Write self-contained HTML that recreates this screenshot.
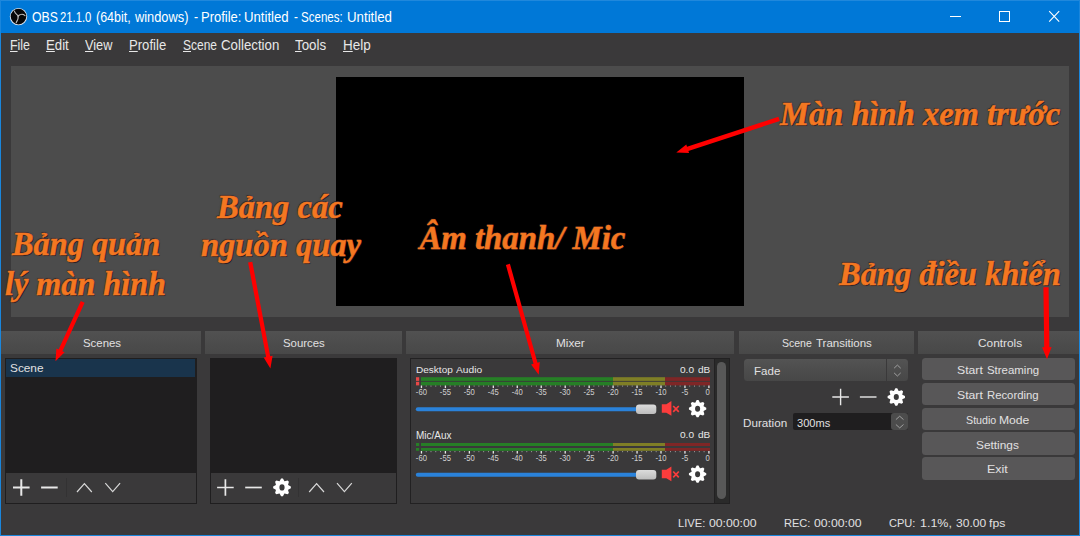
<!DOCTYPE html>
<html lang="vi">
<head>
<meta charset="utf-8">
<title>OBS 21.1.0</title>
<style>
html,body{margin:0;padding:0;}
body{width:1080px;height:536px;overflow:hidden;background:#3a393a;position:relative;font-family:"Liberation Sans","DejaVu Sans",sans-serif;color:#e1e0e1;font-size:12px;}
.abs{position:absolute;}
#title{left:0;top:0;width:1080px;height:33px;background:#0078d7;box-shadow:inset 0 1px 0 #2088dc;}
#frameL{left:0;top:0;width:1.1px;height:536px;background:#1a86dc;}
#frameR{left:1078.6px;top:0;width:1.4px;height:536px;background:#1a86dc;}
#frameB{left:0;top:534.5px;width:1080px;height:1.5px;background:#1a86dc;}
#preview{left:11px;top:66px;width:1058px;height:251px;background:#4c4c4c;}
#black{left:336px;top:77px;width:408px;height:229px;background:#000;}
.dock{top:331px;height:23px;background:linear-gradient(#515151,#484848);}
.list{background:#1f1e1f;box-sizing:border-box;}
.tbar{background:#3a393a;}
.btn{background:#585758;border-radius:3.5px;height:22.4px;left:922px;width:153.4px;}
.tx{position:absolute;white-space:nowrap;transform-origin:0 0;line-height:normal;color:#e1e0e1;font-family:"Liberation Sans","DejaVu Sans",sans-serif;}
.tx.w{color:#fff;}
.tx.m{color:#e8e8e8;}
.tx.m u{text-decoration:underline;text-decoration-thickness:1px;text-underline-offset:0.6px;text-decoration-skip-ink:none;}
.tx.x{color:#e8e8e8;}
.an{position:absolute;white-space:nowrap;transform-origin:0 0;line-height:normal;font-family:"Liberation Serif","DejaVu Serif",serif;font-weight:bold;font-style:italic;color:#f47721;-webkit-text-stroke:0.5px #f47721;text-shadow:1px 1px 0.5px rgba(30,20,25,.75),-0.6px -0.6px 0.6px rgba(30,20,35,.55),0 0 2px rgba(40,25,15,.5);}
svg text{font-family:"Liberation Sans","DejaVu Sans",sans-serif;font-size:8.7px;fill:#d0d0d0;}
</style>
</head>
<body>
<div id="title" class="abs">
 <svg class="abs" style="left:0;top:0" width="1080" height="33" viewBox="0 0 1080 33">
  <circle cx="18.5" cy="16.6" r="8.7" fill="#dfe6ee"/><circle cx="18.5" cy="16.6" r="7.8" fill="#070707"/>
  <g fill="none" stroke="#bdbdbd" stroke-width="1.15" stroke-linecap="round">
   <path d="M18.1 16C17.4 14.2 15 14.2 14.4 11"/><path d="M18.1 16C19.6 14.4 22.6 13.6 25 15.6"/><path d="M18.1 16C18.6 18.2 17.6 20.4 16.2 22.6"/>
  </g>
  <path d="M950 16.5h11" stroke="#fff" stroke-width="1"/><rect x="999.5" y="11.5" width="10" height="10" stroke="#fff" stroke-width="1" fill="none"/><path d="M1049.2 11.2l10 10.4M1059.2 11.2l-10 10.4" stroke="#fff" stroke-width="1.1" fill="none"/>
 </svg>
</div>
<div id="frameL" class="abs"></div><div id="frameR" class="abs"></div><div id="frameB" class="abs"></div>
<div id="preview" class="abs"></div>
<div id="black" class="abs"></div>

<div class="abs dock" style="left:1px;width:200px"></div>
<div class="abs dock" style="left:205px;width:197px"></div>
<div class="abs dock" style="left:406px;width:328px"></div>
<div class="abs dock" style="left:739px;width:175px"></div>
<div class="abs dock" style="left:918px;width:160.5px"></div>

<!-- scenes -->
<div class="abs list" style="left:5px;top:358px;width:192px;height:145.5px"></div>
<div class="abs" style="left:6px;top:358.8px;width:189.4px;height:18.4px;background:#19344c"></div>
<div class="abs tbar" style="left:6px;top:473px;width:190px;height:29.8px"></div>
<!-- sources -->
<div class="abs list" style="left:210px;top:358px;width:187px;height:145.5px"></div>
<div class="abs tbar" style="left:210.8px;top:473px;width:185.4px;height:29.8px"></div>
<!-- mixer -->
<div class="abs" style="left:410px;top:358px;width:320px;height:145.5px;box-sizing:border-box;border:1px solid #222122"></div>
<div class="abs" style="left:714px;top:359px;width:15px;height:143.5px;background:#2a2a2a;box-sizing:border-box;border-left:1px solid #222122"></div>
<div class="abs" style="left:716.9px;top:361.6px;width:9.2px;height:137.6px;border-radius:4.6px;background:#585858"></div>
<!-- transitions -->
<div class="abs" style="left:744px;top:359px;width:164px;height:22px;border-radius:3.5px;background:linear-gradient(#535353,#474747)"></div>
<div class="abs" style="left:886.3px;top:359px;width:1px;height:22px;background:#3a393a"></div>
<div class="abs" style="left:792.7px;top:413.2px;width:115.3px;height:16.5px;background:#1f1e1f;border-radius:2px"></div>
<div class="abs" style="left:891px;top:413.2px;width:17px;height:16.5px;background:#4c4c4c;border-radius:3px"></div>
<!-- controls -->
<div class="abs btn" style="top:358px"></div>
<div class="abs btn" style="top:382.8px"></div>
<div class="abs btn" style="top:407.6px"></div>
<div class="abs btn" style="top:432.4px"></div>
<div class="abs btn" style="top:457.2px"></div>

<svg class="abs" style="left:0;top:0" width="1080" height="536" viewBox="0 0 1080 536">
<defs><linearGradient id="hg" x1="0" y1="0" x2="0" y2="1"><stop offset="0" stop-color="#dcdcdc"/><stop offset="1" stop-color="#bdbdbd"/></linearGradient></defs>
<rect x="416" y="377.2" width="3.2" height="3.7" fill="#e84848"/>
<rect x="421" y="377.2" width="192" height="3.7" fill="#267f26"/>
<rect x="613" y="377.2" width="52" height="3.7" fill="#7f7f26"/>
<rect x="665" y="377.2" width="45" height="3.7" fill="#7f2626"/>
<rect x="416" y="381.8" width="3.2" height="3.6" fill="#e84848"/>
<rect x="421" y="381.8" width="192" height="3.6" fill="#267f26"/>
<rect x="613" y="381.8" width="52" height="3.6" fill="#7f7f26"/>
<rect x="665" y="381.8" width="45" height="3.6" fill="#7f2626"/>
<rect x="420.80" y="385.5" width="1.3" height="2.6" fill="#e6e6e6"/>
<rect x="425.74" y="385.5" width="0.9" height="1.2" fill="#9a9a9a"/>
<rect x="430.53" y="385.5" width="0.9" height="1.2" fill="#9a9a9a"/>
<rect x="435.32" y="385.5" width="0.9" height="1.2" fill="#9a9a9a"/>
<rect x="440.11" y="385.5" width="0.9" height="1.2" fill="#9a9a9a"/>
<rect x="444.75" y="385.5" width="1.3" height="2.6" fill="#e6e6e6"/>
<rect x="449.70" y="385.5" width="0.9" height="1.2" fill="#9a9a9a"/>
<rect x="454.49" y="385.5" width="0.9" height="1.2" fill="#9a9a9a"/>
<rect x="459.28" y="385.5" width="0.9" height="1.2" fill="#9a9a9a"/>
<rect x="464.07" y="385.5" width="0.9" height="1.2" fill="#9a9a9a"/>
<rect x="468.71" y="385.5" width="1.3" height="2.6" fill="#e6e6e6"/>
<rect x="473.65" y="385.5" width="0.9" height="1.2" fill="#9a9a9a"/>
<rect x="478.44" y="385.5" width="0.9" height="1.2" fill="#9a9a9a"/>
<rect x="483.23" y="385.5" width="0.9" height="1.2" fill="#9a9a9a"/>
<rect x="488.02" y="385.5" width="0.9" height="1.2" fill="#9a9a9a"/>
<rect x="492.66" y="385.5" width="1.3" height="2.6" fill="#e6e6e6"/>
<rect x="497.61" y="385.5" width="0.9" height="1.2" fill="#9a9a9a"/>
<rect x="502.40" y="385.5" width="0.9" height="1.2" fill="#9a9a9a"/>
<rect x="507.19" y="385.5" width="0.9" height="1.2" fill="#9a9a9a"/>
<rect x="511.98" y="385.5" width="0.9" height="1.2" fill="#9a9a9a"/>
<rect x="516.62" y="385.5" width="1.3" height="2.6" fill="#e6e6e6"/>
<rect x="521.56" y="385.5" width="0.9" height="1.2" fill="#9a9a9a"/>
<rect x="526.35" y="385.5" width="0.9" height="1.2" fill="#9a9a9a"/>
<rect x="531.14" y="385.5" width="0.9" height="1.2" fill="#9a9a9a"/>
<rect x="535.93" y="385.5" width="0.9" height="1.2" fill="#9a9a9a"/>
<rect x="540.57" y="385.5" width="1.3" height="2.6" fill="#e6e6e6"/>
<rect x="545.52" y="385.5" width="0.9" height="1.2" fill="#9a9a9a"/>
<rect x="550.31" y="385.5" width="0.9" height="1.2" fill="#9a9a9a"/>
<rect x="555.10" y="385.5" width="0.9" height="1.2" fill="#9a9a9a"/>
<rect x="559.89" y="385.5" width="0.9" height="1.2" fill="#9a9a9a"/>
<rect x="564.53" y="385.5" width="1.3" height="2.6" fill="#e6e6e6"/>
<rect x="569.47" y="385.5" width="0.9" height="1.2" fill="#9a9a9a"/>
<rect x="574.26" y="385.5" width="0.9" height="1.2" fill="#9a9a9a"/>
<rect x="579.05" y="385.5" width="0.9" height="1.2" fill="#9a9a9a"/>
<rect x="583.84" y="385.5" width="0.9" height="1.2" fill="#9a9a9a"/>
<rect x="588.49" y="385.5" width="1.3" height="2.6" fill="#e6e6e6"/>
<rect x="593.43" y="385.5" width="0.9" height="1.2" fill="#9a9a9a"/>
<rect x="598.22" y="385.5" width="0.9" height="1.2" fill="#9a9a9a"/>
<rect x="603.01" y="385.5" width="0.9" height="1.2" fill="#9a9a9a"/>
<rect x="607.80" y="385.5" width="0.9" height="1.2" fill="#9a9a9a"/>
<rect x="612.44" y="385.5" width="1.3" height="2.6" fill="#e6e6e6"/>
<rect x="617.38" y="385.5" width="0.9" height="1.2" fill="#9a9a9a"/>
<rect x="622.17" y="385.5" width="0.9" height="1.2" fill="#9a9a9a"/>
<rect x="626.96" y="385.5" width="0.9" height="1.2" fill="#9a9a9a"/>
<rect x="631.75" y="385.5" width="0.9" height="1.2" fill="#9a9a9a"/>
<rect x="636.39" y="385.5" width="1.3" height="2.6" fill="#e6e6e6"/>
<rect x="641.34" y="385.5" width="0.9" height="1.2" fill="#9a9a9a"/>
<rect x="646.13" y="385.5" width="0.9" height="1.2" fill="#9a9a9a"/>
<rect x="650.92" y="385.5" width="0.9" height="1.2" fill="#9a9a9a"/>
<rect x="655.71" y="385.5" width="0.9" height="1.2" fill="#9a9a9a"/>
<rect x="660.35" y="385.5" width="1.3" height="2.6" fill="#e6e6e6"/>
<rect x="665.29" y="385.5" width="0.9" height="1.2" fill="#9a9a9a"/>
<rect x="670.08" y="385.5" width="0.9" height="1.2" fill="#9a9a9a"/>
<rect x="674.87" y="385.5" width="0.9" height="1.2" fill="#9a9a9a"/>
<rect x="679.66" y="385.5" width="0.9" height="1.2" fill="#9a9a9a"/>
<rect x="684.30" y="385.5" width="1.3" height="2.6" fill="#e6e6e6"/>
<rect x="689.25" y="385.5" width="0.9" height="1.2" fill="#9a9a9a"/>
<rect x="694.04" y="385.5" width="0.9" height="1.2" fill="#9a9a9a"/>
<rect x="698.83" y="385.5" width="0.9" height="1.2" fill="#9a9a9a"/>
<rect x="703.62" y="385.5" width="0.9" height="1.2" fill="#9a9a9a"/>
<rect x="708.26" y="385.5" width="1.3" height="2.6" fill="#e6e6e6"/>
<text transform="translate(421.4,394.9) scale(0.88,1)" text-anchor="middle">-60</text>
<text transform="translate(445.4,394.9) scale(0.88,1)" text-anchor="middle">-55</text>
<text transform="translate(469.3,394.9) scale(0.88,1)" text-anchor="middle">-50</text>
<text transform="translate(493.3,394.9) scale(0.88,1)" text-anchor="middle">-45</text>
<text transform="translate(517.2,394.9) scale(0.88,1)" text-anchor="middle">-40</text>
<text transform="translate(541.2,394.9) scale(0.88,1)" text-anchor="middle">-35</text>
<text transform="translate(565.1,394.9) scale(0.88,1)" text-anchor="middle">-30</text>
<text transform="translate(589.1,394.9) scale(0.88,1)" text-anchor="middle">-25</text>
<text transform="translate(613.0,394.9) scale(0.88,1)" text-anchor="middle">-20</text>
<text transform="translate(637.0,394.9) scale(0.88,1)" text-anchor="middle">-15</text>
<text transform="translate(661.0,394.9) scale(0.88,1)" text-anchor="middle">-10</text>
<text transform="translate(684.9,394.9) scale(0.88,1)" text-anchor="middle">-5</text>
<text transform="translate(707.7,394.9) scale(0.88,1)" text-anchor="middle">0</text>
<rect x="415.8" y="407.2" width="222" height="4" rx="2" fill="#2a82da"/>
<rect x="636" y="404.5" width="20.3" height="9.4" rx="3" fill="url(#hg)"/>
<g transform="translate(0,0)"><path d="M661.8 404.2H666.3L671.4 401V415.8L666.3 412.7H661.8Z" fill="#fc3c3c"/><path d="M673.2 406l5.6 5.8M678.8 406l-5.6 5.8" stroke="#fc3c3c" stroke-width="1.7" fill="none"/></g>
<path transform="translate(697.6,408.7) scale(0.98)" d="M-2.53 -6.10 L-2.42 -6.14 L-0.93 -8.85 L0.93 -8.85 L2.42 -6.14 L2.53 -6.10 L2.63 -6.05 L5.60 -6.92 L6.92 -5.60 L6.05 -2.63 L6.10 -2.53 L6.14 -2.42 L8.85 -0.93 L8.85 0.93 L6.14 2.42 L6.10 2.53 L6.05 2.63 L6.92 5.60 L5.60 6.92 L2.63 6.05 L2.53 6.10 L2.42 6.14 L0.93 8.85 L-0.93 8.85 L-2.42 6.14 L-2.53 6.10 L-2.63 6.05 L-5.60 6.92 L-6.92 5.60 L-6.05 2.63 L-6.10 2.53 L-6.14 2.42 L-8.85 0.93 L-8.85 -0.93 L-6.14 -2.42 L-6.10 -2.53 L-6.05 -2.63 L-6.92 -5.60 L-5.60 -6.92 L-2.63 -6.05Z M2.6 0 A2.6 3.1 0 1 0 -2.6 0 A2.6 3.1 0 1 0 2.6 0Z" fill="#fff" fill-rule="evenodd"/>
<rect x="416" y="443.0" width="3.2" height="3.0" fill="#267f26"/>
<rect x="421" y="443.0" width="192" height="3.0" fill="#267f26"/>
<rect x="613" y="443.0" width="52" height="3.0" fill="#7f7f26"/>
<rect x="665" y="443.0" width="45" height="3.0" fill="#7f2626"/>
<rect x="416" y="448.0" width="3.2" height="2.8" fill="#267f26"/>
<rect x="421" y="448.0" width="192" height="2.8" fill="#267f26"/>
<rect x="613" y="448.0" width="52" height="2.8" fill="#7f7f26"/>
<rect x="665" y="448.0" width="45" height="2.8" fill="#7f2626"/>
<rect x="420.80" y="451.0" width="1.3" height="2.6" fill="#e6e6e6"/>
<rect x="425.74" y="451.0" width="0.9" height="1.2" fill="#9a9a9a"/>
<rect x="430.53" y="451.0" width="0.9" height="1.2" fill="#9a9a9a"/>
<rect x="435.32" y="451.0" width="0.9" height="1.2" fill="#9a9a9a"/>
<rect x="440.11" y="451.0" width="0.9" height="1.2" fill="#9a9a9a"/>
<rect x="444.75" y="451.0" width="1.3" height="2.6" fill="#e6e6e6"/>
<rect x="449.70" y="451.0" width="0.9" height="1.2" fill="#9a9a9a"/>
<rect x="454.49" y="451.0" width="0.9" height="1.2" fill="#9a9a9a"/>
<rect x="459.28" y="451.0" width="0.9" height="1.2" fill="#9a9a9a"/>
<rect x="464.07" y="451.0" width="0.9" height="1.2" fill="#9a9a9a"/>
<rect x="468.71" y="451.0" width="1.3" height="2.6" fill="#e6e6e6"/>
<rect x="473.65" y="451.0" width="0.9" height="1.2" fill="#9a9a9a"/>
<rect x="478.44" y="451.0" width="0.9" height="1.2" fill="#9a9a9a"/>
<rect x="483.23" y="451.0" width="0.9" height="1.2" fill="#9a9a9a"/>
<rect x="488.02" y="451.0" width="0.9" height="1.2" fill="#9a9a9a"/>
<rect x="492.66" y="451.0" width="1.3" height="2.6" fill="#e6e6e6"/>
<rect x="497.61" y="451.0" width="0.9" height="1.2" fill="#9a9a9a"/>
<rect x="502.40" y="451.0" width="0.9" height="1.2" fill="#9a9a9a"/>
<rect x="507.19" y="451.0" width="0.9" height="1.2" fill="#9a9a9a"/>
<rect x="511.98" y="451.0" width="0.9" height="1.2" fill="#9a9a9a"/>
<rect x="516.62" y="451.0" width="1.3" height="2.6" fill="#e6e6e6"/>
<rect x="521.56" y="451.0" width="0.9" height="1.2" fill="#9a9a9a"/>
<rect x="526.35" y="451.0" width="0.9" height="1.2" fill="#9a9a9a"/>
<rect x="531.14" y="451.0" width="0.9" height="1.2" fill="#9a9a9a"/>
<rect x="535.93" y="451.0" width="0.9" height="1.2" fill="#9a9a9a"/>
<rect x="540.57" y="451.0" width="1.3" height="2.6" fill="#e6e6e6"/>
<rect x="545.52" y="451.0" width="0.9" height="1.2" fill="#9a9a9a"/>
<rect x="550.31" y="451.0" width="0.9" height="1.2" fill="#9a9a9a"/>
<rect x="555.10" y="451.0" width="0.9" height="1.2" fill="#9a9a9a"/>
<rect x="559.89" y="451.0" width="0.9" height="1.2" fill="#9a9a9a"/>
<rect x="564.53" y="451.0" width="1.3" height="2.6" fill="#e6e6e6"/>
<rect x="569.47" y="451.0" width="0.9" height="1.2" fill="#9a9a9a"/>
<rect x="574.26" y="451.0" width="0.9" height="1.2" fill="#9a9a9a"/>
<rect x="579.05" y="451.0" width="0.9" height="1.2" fill="#9a9a9a"/>
<rect x="583.84" y="451.0" width="0.9" height="1.2" fill="#9a9a9a"/>
<rect x="588.49" y="451.0" width="1.3" height="2.6" fill="#e6e6e6"/>
<rect x="593.43" y="451.0" width="0.9" height="1.2" fill="#9a9a9a"/>
<rect x="598.22" y="451.0" width="0.9" height="1.2" fill="#9a9a9a"/>
<rect x="603.01" y="451.0" width="0.9" height="1.2" fill="#9a9a9a"/>
<rect x="607.80" y="451.0" width="0.9" height="1.2" fill="#9a9a9a"/>
<rect x="612.44" y="451.0" width="1.3" height="2.6" fill="#e6e6e6"/>
<rect x="617.38" y="451.0" width="0.9" height="1.2" fill="#9a9a9a"/>
<rect x="622.17" y="451.0" width="0.9" height="1.2" fill="#9a9a9a"/>
<rect x="626.96" y="451.0" width="0.9" height="1.2" fill="#9a9a9a"/>
<rect x="631.75" y="451.0" width="0.9" height="1.2" fill="#9a9a9a"/>
<rect x="636.39" y="451.0" width="1.3" height="2.6" fill="#e6e6e6"/>
<rect x="641.34" y="451.0" width="0.9" height="1.2" fill="#9a9a9a"/>
<rect x="646.13" y="451.0" width="0.9" height="1.2" fill="#9a9a9a"/>
<rect x="650.92" y="451.0" width="0.9" height="1.2" fill="#9a9a9a"/>
<rect x="655.71" y="451.0" width="0.9" height="1.2" fill="#9a9a9a"/>
<rect x="660.35" y="451.0" width="1.3" height="2.6" fill="#e6e6e6"/>
<rect x="665.29" y="451.0" width="0.9" height="1.2" fill="#9a9a9a"/>
<rect x="670.08" y="451.0" width="0.9" height="1.2" fill="#9a9a9a"/>
<rect x="674.87" y="451.0" width="0.9" height="1.2" fill="#9a9a9a"/>
<rect x="679.66" y="451.0" width="0.9" height="1.2" fill="#9a9a9a"/>
<rect x="684.30" y="451.0" width="1.3" height="2.6" fill="#e6e6e6"/>
<rect x="689.25" y="451.0" width="0.9" height="1.2" fill="#9a9a9a"/>
<rect x="694.04" y="451.0" width="0.9" height="1.2" fill="#9a9a9a"/>
<rect x="698.83" y="451.0" width="0.9" height="1.2" fill="#9a9a9a"/>
<rect x="703.62" y="451.0" width="0.9" height="1.2" fill="#9a9a9a"/>
<rect x="708.26" y="451.0" width="1.3" height="2.6" fill="#e6e6e6"/>
<text transform="translate(421.4,461.1) scale(0.88,1)" text-anchor="middle">-60</text>
<text transform="translate(445.4,461.1) scale(0.88,1)" text-anchor="middle">-55</text>
<text transform="translate(469.3,461.1) scale(0.88,1)" text-anchor="middle">-50</text>
<text transform="translate(493.3,461.1) scale(0.88,1)" text-anchor="middle">-45</text>
<text transform="translate(517.2,461.1) scale(0.88,1)" text-anchor="middle">-40</text>
<text transform="translate(541.2,461.1) scale(0.88,1)" text-anchor="middle">-35</text>
<text transform="translate(565.1,461.1) scale(0.88,1)" text-anchor="middle">-30</text>
<text transform="translate(589.1,461.1) scale(0.88,1)" text-anchor="middle">-25</text>
<text transform="translate(613.0,461.1) scale(0.88,1)" text-anchor="middle">-20</text>
<text transform="translate(637.0,461.1) scale(0.88,1)" text-anchor="middle">-15</text>
<text transform="translate(661.0,461.1) scale(0.88,1)" text-anchor="middle">-10</text>
<text transform="translate(684.9,461.1) scale(0.88,1)" text-anchor="middle">-5</text>
<text transform="translate(707.7,461.1) scale(0.88,1)" text-anchor="middle">0</text>
<rect x="415.8" y="472.7" width="222" height="4" rx="2" fill="#2a82da"/>
<rect x="636" y="470.0" width="20.3" height="9.4" rx="3" fill="url(#hg)"/>
<g transform="translate(0,65.5)"><path d="M661.8 404.2H666.3L671.4 401V415.8L666.3 412.7H661.8Z" fill="#fc3c3c"/><path d="M673.2 406l5.6 5.8M678.8 406l-5.6 5.8" stroke="#fc3c3c" stroke-width="1.7" fill="none"/></g>
<path transform="translate(697.6,474.2) scale(0.98)" d="M-2.53 -6.10 L-2.42 -6.14 L-0.93 -8.85 L0.93 -8.85 L2.42 -6.14 L2.53 -6.10 L2.63 -6.05 L5.60 -6.92 L6.92 -5.60 L6.05 -2.63 L6.10 -2.53 L6.14 -2.42 L8.85 -0.93 L8.85 0.93 L6.14 2.42 L6.10 2.53 L6.05 2.63 L6.92 5.60 L5.60 6.92 L2.63 6.05 L2.53 6.10 L2.42 6.14 L0.93 8.85 L-0.93 8.85 L-2.42 6.14 L-2.53 6.10 L-2.63 6.05 L-5.60 6.92 L-6.92 5.60 L-6.05 2.63 L-6.10 2.53 L-6.14 2.42 L-8.85 0.93 L-8.85 -0.93 L-6.14 -2.42 L-6.10 -2.53 L-6.05 -2.63 L-6.92 -5.60 L-5.60 -6.92 L-2.63 -6.05Z M2.6 0 A2.6 3.1 0 1 0 -2.6 0 A2.6 3.1 0 1 0 2.6 0Z" fill="#fff" fill-rule="evenodd"/>
<path d="M13.0 487.5H29.6M21.3 479.2V495.8" stroke="#e8e8e8" stroke-width="2" fill="none"/>
<path d="M41.099999999999994 487.5H57.7" stroke="#e8e8e8" stroke-width="2" fill="none"/>
<rect x="66" y="478" width="1" height="19" fill="#333233"/>
<path d="M77.0 492.0L84.4 483.6L91.80000000000001 492.0" stroke="#d8d8d8" stroke-width="1.2" fill="none"/>
<path d="M105.3 483.20000000000005L112.7 491.6L120.10000000000001 483.20000000000005" stroke="#d8d8d8" stroke-width="1.2" fill="none"/>
<path d="M217.1 487.5H233.70000000000002M225.4 479.2V495.8" stroke="#e8e8e8" stroke-width="1.7" fill="none"/>
<path d="M245.2 487.5H261.8" stroke="#e8e8e8" stroke-width="1.7" fill="none"/>
<path transform="translate(282,487.4) scale(1.0)" d="M-2.53 -6.10 L-2.42 -6.14 L-0.93 -8.85 L0.93 -8.85 L2.42 -6.14 L2.53 -6.10 L2.63 -6.05 L5.60 -6.92 L6.92 -5.60 L6.05 -2.63 L6.10 -2.53 L6.14 -2.42 L8.85 -0.93 L8.85 0.93 L6.14 2.42 L6.10 2.53 L6.05 2.63 L6.92 5.60 L5.60 6.92 L2.63 6.05 L2.53 6.10 L2.42 6.14 L0.93 8.85 L-0.93 8.85 L-2.42 6.14 L-2.53 6.10 L-2.63 6.05 L-5.60 6.92 L-6.92 5.60 L-6.05 2.63 L-6.10 2.53 L-6.14 2.42 L-8.85 0.93 L-8.85 -0.93 L-6.14 -2.42 L-6.10 -2.53 L-6.05 -2.63 L-6.92 -5.60 L-5.60 -6.92 L-2.63 -6.05Z M2.6 0 A2.6 3.1 0 1 0 -2.6 0 A2.6 3.1 0 1 0 2.6 0Z" fill="#fff" fill-rule="evenodd"/>
<rect x="298" y="478" width="1" height="19" fill="#333233"/>
<path d="M309.20000000000005 492.0L316.6 483.6L324.0 492.0" stroke="#d8d8d8" stroke-width="1.2" fill="none"/>
<path d="M337.0 483.20000000000005L344.4 491.6L351.79999999999995 483.20000000000005" stroke="#d8d8d8" stroke-width="1.2" fill="none"/>
<path d="M832.3000000000001 397H848.9M840.6 388.7V405.3" stroke="#e8e8e8" stroke-width="1.4" fill="none"/>
<path d="M859.9000000000001 397H876.5" stroke="#e8e8e8" stroke-width="1.4" fill="none"/>
<path transform="translate(896.3,397) scale(0.98)" d="M-2.53 -6.10 L-2.42 -6.14 L-0.93 -8.85 L0.93 -8.85 L2.42 -6.14 L2.53 -6.10 L2.63 -6.05 L5.60 -6.92 L6.92 -5.60 L6.05 -2.63 L6.10 -2.53 L6.14 -2.42 L8.85 -0.93 L8.85 0.93 L6.14 2.42 L6.10 2.53 L6.05 2.63 L6.92 5.60 L5.60 6.92 L2.63 6.05 L2.53 6.10 L2.42 6.14 L0.93 8.85 L-0.93 8.85 L-2.42 6.14 L-2.53 6.10 L-2.63 6.05 L-5.60 6.92 L-6.92 5.60 L-6.05 2.63 L-6.10 2.53 L-6.14 2.42 L-8.85 0.93 L-8.85 -0.93 L-6.14 -2.42 L-6.10 -2.53 L-6.05 -2.63 L-6.92 -5.60 L-5.60 -6.92 L-2.63 -6.05Z M2.6 0 A2.6 3.1 0 1 0 -2.6 0 A2.6 3.1 0 1 0 2.6 0Z" fill="#fff" fill-rule="evenodd"/>
<g stroke="#a8a8a8" stroke-width="0.9" fill="none">
<path d="M894.1 368.2l3.3-3.1 3.3 3.1M894.1 372.9l3.3 3.1 3.3-3.1"/>
<path d="M895.9 419.6l3.8-3.4 3.8 3.4M895.9 424.5l3.8 3.4 3.8-3.4"/>
</g>
</svg>

<span class="tx w" style="left:32.3px;top:8.9px;font-size:14.2px;transform:scaleX(0.864)">OBS</span>
<span class="tx w" style="left:60.0px;top:8.9px;font-size:14.2px;transform:scaleX(0.796)">21.1.0</span>
<span class="tx w" style="left:96.0px;top:8.9px;font-size:14.2px;transform:scaleX(0.880)">(64bit,</span>
<span class="tx w" style="left:134.8px;top:8.9px;font-size:14.2px;transform:scaleX(0.903)">windows)</span>
<span class="tx w" style="left:193.6px;top:8.9px;font-size:14.2px;transform:scaleX(0.866)">-</span>
<span class="tx w" style="left:201.0px;top:8.9px;font-size:14.2px;transform:scaleX(0.915)">Profile:</span>
<span class="tx w" style="left:244.3px;top:8.9px;font-size:14.2px;transform:scaleX(0.929)">Untitled</span>
<span class="tx w" style="left:294.3px;top:8.9px;font-size:14.2px;transform:scaleX(0.824)">-</span>
<span class="tx w" style="left:301.0px;top:8.9px;font-size:14.2px;transform:scaleX(0.813)">Scenes:</span>
<span class="tx w" style="left:347.3px;top:8.9px;font-size:14.2px;transform:scaleX(0.935)">Untitled</span>
<span class="tx m" style="left:9.5px;top:37.1px;font-size:14.3px;transform:scaleX(0.868)"><u>F</u>ile</span>
<span class="tx m" style="left:45.5px;top:37.1px;font-size:14.3px;transform:scaleX(0.925)"><u>E</u>dit</span>
<span class="tx m" style="left:84.8px;top:37.1px;font-size:14.3px;transform:scaleX(0.892)"><u>V</u>iew</span>
<span class="tx m" style="left:129.3px;top:37.1px;font-size:14.3px;transform:scaleX(0.917)"><u>P</u>rofile</span>
<span class="tx m" style="left:183.3px;top:37.1px;font-size:14.3px;transform:scaleX(0.838)"><u>S</u>cene</span>
<span class="tx m" style="left:220.5px;top:37.1px;font-size:14.3px;transform:scaleX(0.929)">Collection</span>
<span class="tx m" style="left:294.8px;top:37.1px;font-size:14.3px;transform:scaleX(0.934)"><u>T</u>ools</span>
<span class="tx m" style="left:342.6px;top:37.1px;font-size:14.3px;transform:scaleX(0.941)"><u>H</u>elp</span>
<span class="tx s" style="left:83.0px;top:336.5px;font-size:11.5px;transform:scaleX(0.991)">Scenes</span>
<span class="tx s" style="left:283.0px;top:336.5px;font-size:11.5px;transform:scaleX(0.991)">Sources</span>
<span class="tx s" style="left:555.6px;top:336.5px;font-size:11.5px;transform:scaleX(1.024)">Mixer</span>
<span class="tx s" style="left:782.0px;top:336.5px;font-size:11.5px;transform:scaleX(0.914)">Scene</span>
<span class="tx s" style="left:816.4px;top:336.5px;font-size:11.5px;transform:scaleX(1.001)">Transitions</span>
<span class="tx s" style="left:977.5px;top:336.5px;font-size:11.5px;transform:scaleX(1.030)">Controls</span>
<span class="tx s" style="left:9.8px;top:362.0px;font-size:11.5px;transform:scaleX(1.027)">Scene</span>
<span class="tx x" style="left:680.0px;top:364.0px;font-size:9.7px;transform:scaleX(1.039)">0.0</span>
<span class="tx x" style="left:698.0px;top:364.0px;font-size:9.7px;transform:scaleX(1.037)">dB</span>
<span class="tx x" style="left:680.0px;top:428.6px;font-size:9.7px;transform:scaleX(1.039)">0.0</span>
<span class="tx x" style="left:698.0px;top:428.6px;font-size:9.7px;transform:scaleX(1.037)">dB</span>
<span class="tx x" style="left:416.0px;top:364.0px;font-size:9.7px;transform:scaleX(1.035)">Desktop</span>
<span class="tx x" style="left:456.3px;top:364.0px;font-size:9.7px;transform:scaleX(1.057)">Audio</span>
<span class="tx x" style="left:416.0px;top:429.2px;font-size:10.6px;transform:scaleX(0.942)">Mic/Aux</span>
<span class="tx s" style="left:957.2px;top:363.8px;font-size:11.5px;transform:scaleX(1.062)">Start</span>
<span class="tx s" style="left:986.5px;top:363.8px;font-size:11.5px;transform:scaleX(0.994)">Streaming</span>
<span class="tx s" style="left:957.2px;top:388.7px;font-size:11.5px;transform:scaleX(1.062)">Start</span>
<span class="tx s" style="left:987.0px;top:388.7px;font-size:11.5px;transform:scaleX(0.984)">Recording</span>
<span class="tx s" style="left:965.7px;top:413.6px;font-size:11.5px;transform:scaleX(0.929)">Studio</span>
<span class="tx s" style="left:999.3px;top:413.6px;font-size:11.5px;transform:scaleX(1.056)">Mode</span>
<span class="tx s" style="left:976.2px;top:438.5px;font-size:11.5px;transform:scaleX(1.032)">Settings</span>
<span class="tx s" style="left:986.6px;top:463.2px;font-size:11.5px;transform:scaleX(1.085)">Exit</span>
<span class="tx s" style="left:754.4px;top:364.8px;font-size:11.5px;transform:scaleX(1.003)">Fade</span>
<span class="tx s" style="left:743.2px;top:416.6px;font-size:11.5px;transform:scaleX(1.015)">Duration</span>
<span class="tx s" style="left:796.7px;top:416.6px;font-size:11.5px;transform:scaleX(0.961)">300ms</span>
<span class="tx s" style="left:678.0px;top:516.6px;font-size:11.5px;transform:scaleX(0.974)">LIVE:</span>
<span class="tx s" style="left:709.2px;top:516.6px;font-size:11.5px;transform:scaleX(1.063)">00:00:00</span>
<span class="tx s" style="left:784.0px;top:516.6px;font-size:11.5px;transform:scaleX(0.961)">REC:</span>
<span class="tx s" style="left:813.7px;top:516.6px;font-size:11.5px;transform:scaleX(1.063)">00:00:00</span>
<span class="tx s" style="left:889.0px;top:516.6px;font-size:11.5px;transform:scaleX(0.961)">CPU:</span>
<span class="tx s" style="left:919.6px;top:516.6px;font-size:11.5px;transform:scaleX(1.084)">1.1%,</span>
<span class="tx s" style="left:955.7px;top:516.6px;font-size:11.5px;transform:scaleX(1.046)">30.00</span>
<span class="tx s" style="left:989.0px;top:516.6px;font-size:11.5px;transform:scaleX(1.062)">fps</span>

<span class="an" style="left:779.6px;top:96.4px;font-size:32.8px;transform:scaleX(0.992)">Màn hình xem trước</span>
<span class="an" style="left:217.2px;top:188.7px;font-size:32.8px;transform:scaleX(0.992)">Bảng các</span>
<span class="an" style="left:200.5px;top:227.0px;font-size:32.8px;transform:scaleX(0.992)">nguồn quay</span>
<span class="an" style="left:419.4px;top:220.2px;font-size:32.8px;transform:scaleX(1.000)">Âm thanh/ Mic</span>
<span class="an" style="left:11.6px;top:226.1px;font-size:32.8px;transform:scaleX(0.985)">Bảng quản</span>
<span class="an" style="left:4.6px;top:265.7px;font-size:32.8px;transform:scaleX(0.981)">lý màn hình</span>
<span class="an" style="left:838.6px;top:256.3px;font-size:32.8px;transform:scaleX(0.989)">Bảng điều khiển</span>
<svg class="abs" style="left:0;top:0" width="1080" height="536" viewBox="0 0 1080 536">
<path d="M778.4 116.8 L687.0 146.7 L686.3 144.6 L676.3 152.6 L689.1 153.1 L688.4 151.0 L779.8 121.0Z" fill="#ff0000"/>
<path d="M80.8 300.9 L58.6 349.5 L56.4 348.5 L55.5 361.3 L64.6 352.3 L62.4 351.3 L84.6 302.7Z" fill="#ff0000"/>
<path d="M248.1 262.5 L266.1 357.0 L263.7 357.5 L270.4 368.4 L272.6 355.8 L270.2 356.2 L252.3 261.7Z" fill="#ff0000"/>
<path d="M505.9 265.0 L533.5 363.8 L531.1 364.5 L538.7 374.8 L539.8 362.0 L537.5 362.7 L509.9 263.8Z" fill="#ff0000"/>
<path d="M1043.4 287.2 L1044.2 347.2 L1042.1 347.3 L1047.0 359.2 L1051.6 347.1 L1049.4 347.2 L1048.6 287.2Z" fill="#ff0000"/>
</svg>
</body>
</html>
